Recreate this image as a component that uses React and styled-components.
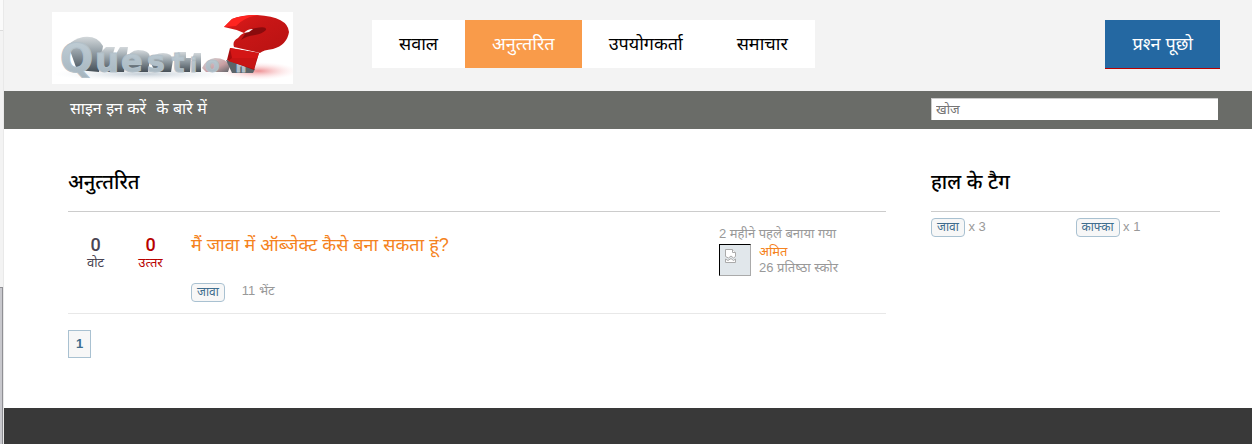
import React from 'react';
import styled, { createGlobalStyle } from 'styled-components';

const COLORS = {
  orange: '#f58220',
  navOrange: '#f99b4a',
  blue: '#2468a2',
  red: '#b80000',
  bar: '#6a6c68',
  muted: '#999999',
  line: '#cccccc',
  tagBorder: '#a9c1d1',
  tagText: '#3e6d8e',
};

// U+200D keeps the half form of the consonant instead of the stacked ligature
const UNANSWERED = 'अनुत्\u200dतरित';
const ANSWERS = 'उत्\u200dतर';
const REPUTATION = '26 प्रतिष्\u200dठा स्कोर';
const ASK = 'प्रश्\u200dन पूछो';

const NAV_ITEMS = [
  { label: 'सवाल' },
  { label: UNANSWERED, active: true },
  { label: 'उपयोगकर्ता' },
  { label: 'समाचार' },
];

const TAGS = [
  { name: 'जावा', count: 3 },
  { name: 'काफ्का', count: 1 },
];

const App = () => (
  <Window>
    <GlobalStyle />
    <Edge>
      <EdgeTop />
      <EdgeThumb />
    </Edge>
    <Page>
      <Header>
        <Logo />
        <Nav>
          {NAV_ITEMS.map(({ label, active }) => (
            <NavLink key={label} href="#" $active={active}>
              {label}
            </NavLink>
          ))}
        </Nav>
        <AskLink href="#">{ASK}</AskLink>
      </Header>
      <UserBar>
        <UserLinks>
          <a href="#">साइन इन करें</a>
          <a href="#">के बारे में</a>
        </UserLinks>
        <SearchInput type="text" aria-label="खोज" placeholder="खोज" />
      </UserBar>
      <Content>
        <Main>
          <Title>{UNANSWERED}</Title>
          <Question>
            <Stat $color="#4a4453">
              <strong>0</strong>
              <span>वोट</span>
            </Stat>
            <Stat $color={COLORS.red}>
              <strong>0</strong>
              <span>{ANSWERS}</span>
            </Stat>
            <Summary>
              <QuestionLink href="#">
                मैं जावा में ऑब्जेक्ट कैसे बना सकता हूं?
              </QuestionLink>
              <Meta>
                <Tag href="#">जावा</Tag>
                <span>11 भेंट</span>
              </Meta>
            </Summary>
            <Author>
              <div>2 महीने पहले बनाया गया</div>
              <AuthorRow>
                <Avatar>
                  <BrokenImage />
                </Avatar>
                <div>
                  <AuthorLink href="#">अमित</AuthorLink>
                  <div>{REPUTATION}</div>
                </div>
              </AuthorRow>
            </Author>
          </Question>
          <PageLink href="#">1</PageLink>
        </Main>
        <Sidebar>
          <Title>हाल के टैग</Title>
          <TagList>
            {TAGS.map(({ name, count }) => (
              <li key={name}>
                <Tag href="#">{name}</Tag> x {count}
              </li>
            ))}
          </TagList>
        </Sidebar>
      </Content>
      <Footer />
    </Page>
  </Window>
);

const Logo = () => (
  <LogoImage viewBox="0 0 241 72" role="img" aria-label="Question">
    <defs>
      <linearGradient id="face" x1="0" y1="0" x2="0" y2="1">
        <stop offset="0" stopColor="#c3d0d8" />
        <stop offset="1" stopColor="#a3b3bd" />
      </linearGradient>
      <linearGradient id="body" x1="0" y1="0" x2="0" y2="1">
        <stop offset="0" stopColor="#d3d8db" />
        <stop offset="0.4" stopColor="#98a3aa" />
        <stop offset="1" stopColor="#465058" />
      </linearGradient>
      <linearGradient id="pink" x1="0" y1="0" x2="1" y2="1">
        <stop offset="0" stopColor="#d9dcde" />
        <stop offset="0.6" stopColor="#c99fa2" />
        <stop offset="1" stopColor="#5d6469" />
      </linearGradient>
      <linearGradient id="mark" x1="0" y1="0" x2="1" y2="1">
        <stop offset="0" stopColor="#e01c1a" />
        <stop offset="0.4" stopColor="#c81616" />
        <stop offset="1" stopColor="#b81212" />
      </linearGradient>
      <radialGradient id="glow">
        <stop offset="0" stopColor="#e2454a" stopOpacity="0.6" />
        <stop offset="1" stopColor="#ffd5d9" stopOpacity="0" />
      </radialGradient>
      <radialGradient id="shade">
        <stop offset="0" stopColor="#aab8c4" stopOpacity="0.7" />
        <stop offset="1" stopColor="#e8eef3" stopOpacity="0" />
      </radialGradient>
    </defs>
    <rect width="241" height="72" fill="#fff" />
    <ellipse cx="92" cy="62" rx="92" ry="7" fill="url(#shade)" />
    <ellipse cx="206" cy="59" rx="40" ry="9" fill="url(#glow)" />
    <g fill="url(#body)">
      <path d="M16 33 Q22 27 31 25 Q45 23 51 34 L47 60 L25 58Z" />
      <path d="M46 43 L54 35 L63 35 L60 45 L64 42 L68 35 L76 35 L72 60 L50 60Z" />
      <path d="M72 50 Q78 38 86 38 Q98 38 98 46 L96 60 L80 60Z" />
      <path d="M98 49 Q102 41 111 41 Q120 41 121 48 L119 60 L103 60Z" />
      <path d="M122 46 L126 40 L134 40 L134 46 L139 46 L138 60 L127 60Z" />
      <path d="M140 48 L142 41 L149 41 L149 60 L141 60Z" />
    </g>
    <path d="M150 56 Q154 47 163 46 Q174 46 178 54 L176 60 L154 60Z" fill="url(#pink)" />
    <path d="M174 48 L182 49 L203 57 L201 61 L180 61Z" fill="#5c6469" />
    <LogoLetters>
      <text x="8" y="60" fontSize="39">Q</text>
      <text x="43" y="60" fontSize="34">u</text>
      <text x="69" y="60" fontSize="32">e</text>
      <text x="95" y="60" fontSize="30">s</text>
      <text x="120" y="60" fontSize="26">t</text>
      <text x="138" y="60" fontSize="20">i</text>
      <text x="153" y="60" fontSize="21">o</text>
      <text x="184" y="60" fontSize="14">n</text>
    </LogoLetters>
    <path d="M178 36 L207 41 L202 58 L175 48Z" fill="#a80d0f" />
    <path d="M178 36 L207 41 L205 47 L180 46Z" fill="#d41616" />
    <path d="M180 46 L205 46 L202 57 L176 49Z" fill="#c81414" />
    <path
      d="M172 15 L180 7 Q190 3 205 3 Q236 5 237 20 Q235 33 221 37 Q211 38 208 41 L182 35 Q180 29 186 26 Q189 22 192 21 Q183 17 172 15Z"
      fill="url(#mark)"
    />
    <path d="M172 15 L180 7 Q190 3 207 3 Q192 5 184 14Z" fill="#ff2420" />
    <path d="M193 22 Q196 17 204 16 Q215 14 214 18 Q210 22 203 23 Q194 24 189 28Z" fill="#8a0b0d" />
    <path d="M192 21 Q195 17 201 17 L197 20Z" fill="#fff" />
  </LogoImage>
);

const BrokenImage = () => (
  <svg width="12" height="14" viewBox="0 0 12 14" fill="#fff" stroke="#aaa" aria-hidden="true">
    <path d="M.5 7.5V.5h7l3 3v4L8.500 9 6 7 3.500 9z" />
    <path d="M7.500.5v3h3" />
    <path d="M.5 13.500V10L3 11.500 6 9.500l2.500 2 2-1.500v3.500z" />
  </svg>
);

const GlobalStyle = createGlobalStyle`
  * {
    box-sizing: border-box;
  }

  body {
    margin: 0;
    background: #fff;
    font-family: 'Liberation Sans', 'Noto Sans', 'Noto Sans Devanagari', sans-serif;
    font-size: 13px;
    line-height: 16px;
  }

  a {
    color: inherit;
    text-decoration: none;
  }
`;

const Window = styled.div`
  display: flex;
  min-height: 100vh;
  padding-bottom: 3px;
`;

const Edge = styled.div`
  display: flex;
  flex-direction: column;
  justify-content: space-between;
  flex: none;
  width: 4px;
  background: #f3f3f3;
  border-right: 1px solid #e9e9e9;
`;

const EdgeTop = styled.div`
  height: 31px;
  background: #fafafa;
  border-bottom: 1px solid #dcdcdc;
`;

const EdgeThumb = styled.div`
  height: 157px;
  background: #c8c8cd;
  border: 1px solid #8f8f94;
  border-width: 1px 1px 0 0;
`;

const Page = styled.div`
  display: flex;
  flex: 1;
  flex-direction: column;
`;

const Header = styled.header`
  display: flex;
  align-items: flex-start;
  padding: 12px 32px 7px 48px;
  background: #f3f3f3;
`;

const LogoImage = styled.svg`
  flex: none;
  width: 241px;
  height: 72px;
`;

const LogoLetters = styled.g`
  fill: url(#face);
  stroke: #b3c1ca;
  stroke-width: 1px;
  font-family: 'DejaVu Sans', sans-serif;
  font-weight: bold;
`;

const Nav = styled.nav`
  display: flex;
  margin: 8px auto 0 79px;
  background: #fff;
`;

const NavLink = styled.a`
  padding: 0 27px;
  font-size: 18px;
  line-height: 48px;
  color: ${(p) => (p.$active ? '#fff' : '#000')};
  background: ${(p) => (p.$active ? COLORS.navOrange : 'transparent')};
`;

const AskLink = styled.a`
  margin-top: 8px;
  padding: 0 27px;
  font-size: 18px;
  line-height: 48px;
  color: #fff;
  background: ${COLORS.blue};
  border-bottom: 1px solid ${COLORS.red};
`;

const UserBar = styled.div`
  display: flex;
  align-items: flex-start;
  justify-content: space-between;
  height: 38px;
  padding: 7px 34px 0 66px;
  color: #fff;
  background: ${COLORS.bar};
`;

const UserLinks = styled.div`
  display: flex;
  gap: 10px;
  font-size: 16px;
  line-height: 22px;
`;

const SearchInput = styled.input`
  width: 287px;
  height: 22px;
  padding: 0 4px;
  border: 0;
  border-top: 1px solid ${COLORS.line};
  border-left: 1px solid ${COLORS.line};
  font: inherit;
`;

const Content = styled.div`
  display: flex;
  flex: 1;
  gap: 45px;
  padding: 40px 32px 50px 64px;
`;

const Main = styled.main`
  flex: 1;
`;

const Sidebar = styled.aside`
  width: 289px;
`;

const Title = styled.h1`
  margin: 0;
  padding-bottom: 16px;
  border-bottom: 1px solid ${COLORS.line};
  font-size: 20px;
  font-weight: 500;
  line-height: 26px;
`;

const Question = styled.article`
  display: flex;
  padding: 14px 0 11px;
  border-bottom: 1px solid #e8e8e8;
`;

const Stat = styled.div`
  display: flex;
  flex-direction: column;
  width: 55px;
  padding-top: 9px;
  text-align: center;
  font-size: 13px;
  color: ${(p) => p.$color};

  strong {
    font-family: Roboto, sans-serif;
    font-size: 18px;
    font-weight: 500;
    line-height: 20px;
  }
`;

const Summary = styled.div`
  flex: 1;
  padding: 7px 0 0 13px;
`;

const QuestionLink = styled.a`
  display: block;
  font-size: 18px;
  line-height: 24px;
  color: ${COLORS.orange};
`;

const Meta = styled.div`
  display: flex;
  gap: 17px;
  margin-top: 26px;
  color: ${COLORS.muted};
`;

const Tag = styled.a`
  display: inline-block;
  padding: 0 5px;
  border: 1px solid ${COLORS.tagBorder};
  border-radius: 4px;
  background: #f7f7f7;
  color: ${COLORS.tagText};
  font-size: 12px;
  line-height: 17px;
`;

const Author = styled.div`
  width: 167px;
  color: ${COLORS.muted};
`;

const AuthorRow = styled.div`
  display: flex;
  gap: 8px;
  margin-top: 2px;
`;

const Avatar = styled.div`
  width: 32px;
  height: 32px;
  padding: 4px 5px;
  border: 1px solid #aaa;
  border-top-color: #000;
  border-left-color: #000;
  background: #e1e7eb;
`;

const AuthorLink = styled.a`
  color: ${COLORS.orange};
`;

const PageLink = styled.a`
  display: inline-block;
  margin-top: 16px;
  padding: 0 7px;
  border: 1px solid ${COLORS.tagBorder};
  background: #f7f7f7;
  color: ${COLORS.tagText};
  font-weight: bold;
  line-height: 26px;
`;

const TagList = styled.ul`
  display: grid;
  grid-template-columns: 1fr 1fr;
  margin: 6px 0 0;
  padding: 0;
  list-style: none;
  color: ${COLORS.muted};
`;

const Footer = styled.footer`
  height: 36px;
  background: #393939;
`;

export default App;
